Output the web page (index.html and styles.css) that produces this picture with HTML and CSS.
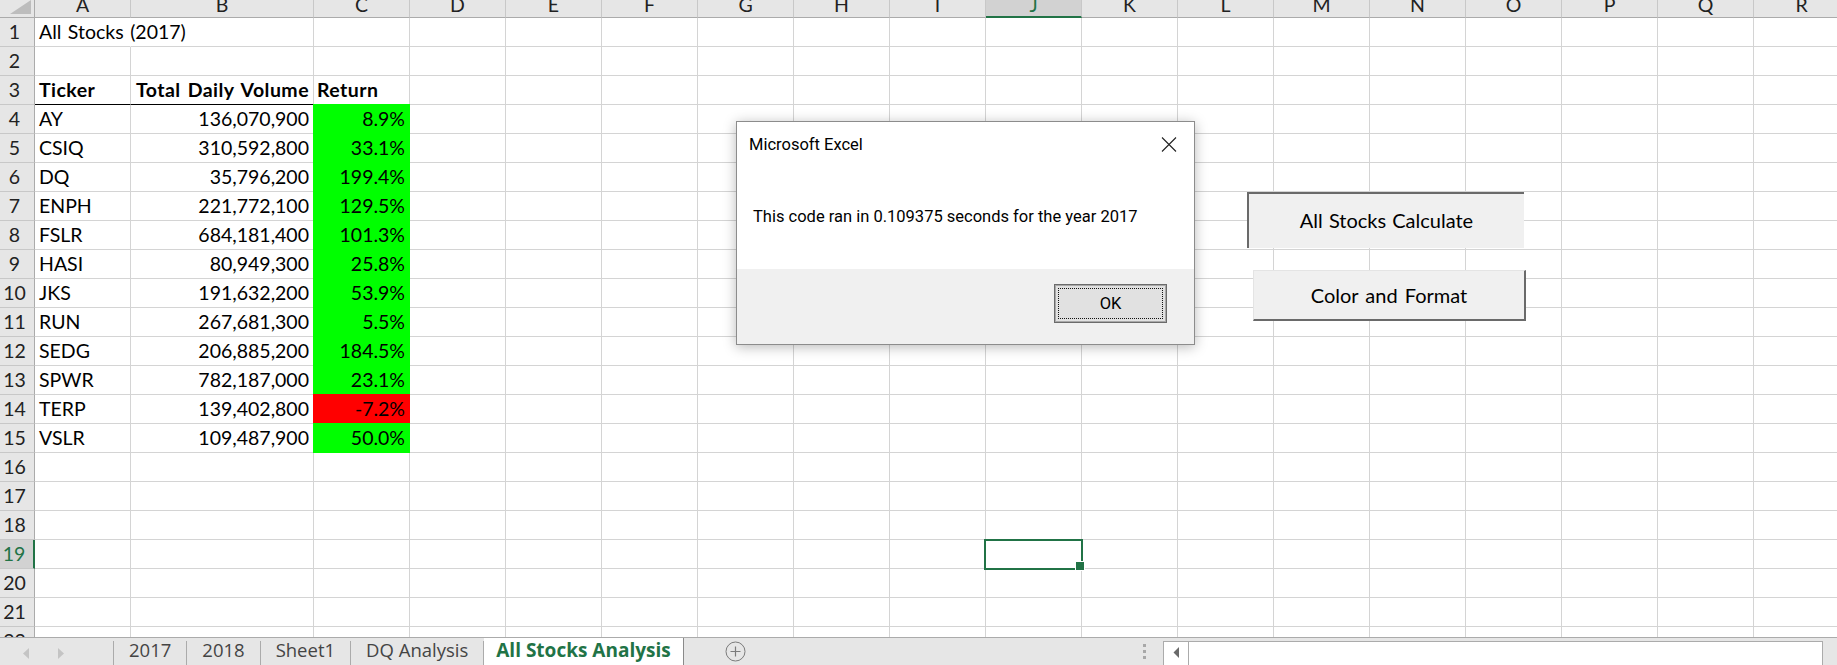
FILE: index.html
```html
<!DOCTYPE html>
<html>
<head>
<meta charset="utf-8">
<title>All Stocks Analysis</title>
<link rel="stylesheet" href="styles.css">
</head>
<body>
<div class="app">
  <div class="sheet">
    <div class="row head">
      <div class="corner"><svg width="34" height="17" viewBox="0 0 34 17"><polygon points="10,14 31,14 31,0" fill="#bdbdbd"/></svg></div>
      <div class="ch w-a">A</div>
      <div class="ch w-b">B</div>
      <div class="ch w-c">C</div>
      <div class="ch">D</div>
      <div class="ch">E</div>
      <div class="ch">F</div>
      <div class="ch">G</div>
      <div class="ch">H</div>
      <div class="ch">I</div>
      <div class="ch sel">J</div>
      <div class="ch">K</div>
      <div class="ch">L</div>
      <div class="ch">M</div>
      <div class="ch">N</div>
      <div class="ch">O</div>
      <div class="ch">P</div>
      <div class="ch">Q</div>
      <div class="ch">R</div>
    </div>

    <div class="row"><div class="rh">1</div><div class="c a spill">All Stocks (2017)</div><div class="c b"></div><div class="c cc"></div><div class="rest"></div></div>
    <div class="row"><div class="rh">2</div><div class="c a"></div><div class="c b"></div><div class="c cc"></div><div class="rest"></div></div>
    <div class="row"><div class="rh">3</div><div class="c a th">Ticker</div><div class="c b th">Total Daily Volume</div><div class="c cc th left">Return</div><div class="rest"></div></div>
    <div class="row"><div class="rh">4</div><div class="c a">AY</div><div class="c b">136,070,900</div><div class="c cc pos">8.9%</div><div class="rest"></div></div>
    <div class="row"><div class="rh">5</div><div class="c a">CSIQ</div><div class="c b">310,592,800</div><div class="c cc pos">33.1%</div><div class="rest"></div></div>
    <div class="row"><div class="rh">6</div><div class="c a">DQ</div><div class="c b">35,796,200</div><div class="c cc pos">199.4%</div><div class="rest"></div></div>
    <div class="row"><div class="rh">7</div><div class="c a">ENPH</div><div class="c b">221,772,100</div><div class="c cc pos">129.5%</div><div class="rest"></div></div>
    <div class="row"><div class="rh">8</div><div class="c a">FSLR</div><div class="c b">684,181,400</div><div class="c cc pos">101.3%</div><div class="rest"></div></div>
    <div class="row"><div class="rh">9</div><div class="c a">HASI</div><div class="c b">80,949,300</div><div class="c cc pos">25.8%</div><div class="rest"></div></div>
    <div class="row"><div class="rh">10</div><div class="c a">JKS</div><div class="c b">191,632,200</div><div class="c cc pos">53.9%</div><div class="rest"></div></div>
    <div class="row"><div class="rh">11</div><div class="c a">RUN</div><div class="c b">267,681,300</div><div class="c cc pos">5.5%</div><div class="rest"></div></div>
    <div class="row"><div class="rh">12</div><div class="c a">SEDG</div><div class="c b">206,885,200</div><div class="c cc pos">184.5%</div><div class="rest"></div></div>
    <div class="row"><div class="rh">13</div><div class="c a">SPWR</div><div class="c b">782,187,000</div><div class="c cc pos">23.1%</div><div class="rest"></div></div>
    <div class="row"><div class="rh">14</div><div class="c a">TERP</div><div class="c b">139,402,800</div><div class="c cc neg">-7.2%</div><div class="rest"></div></div>
    <div class="row"><div class="rh">15</div><div class="c a">VSLR</div><div class="c b">109,487,900</div><div class="c cc pos">50.0%</div><div class="rest"></div></div>
    <div class="row"><div class="rh">16</div><div class="c a"></div><div class="c b"></div><div class="c cc"></div><div class="rest"></div></div>
    <div class="row"><div class="rh">17</div><div class="c a"></div><div class="c b"></div><div class="c cc"></div><div class="rest"></div></div>
    <div class="row"><div class="rh">18</div><div class="c a"></div><div class="c b"></div><div class="c cc"></div><div class="rest"></div></div>
    <div class="row"><div class="rh rsel">19</div><div class="c a"></div><div class="c b"></div><div class="c cc"></div><div class="rest"></div></div>
    <div class="row"><div class="rh">20</div><div class="c a"></div><div class="c b"></div><div class="c cc"></div><div class="rest"></div></div>
    <div class="row"><div class="rh">21</div><div class="c a"></div><div class="c b"></div><div class="c cc"></div><div class="rest"></div></div>
    <div class="row"><div class="rh">22</div><div class="c a"></div><div class="c b"></div><div class="c cc"></div><div class="rest"></div></div>
  </div>

  <div class="tabbar">
    <div class="tabnav">
      <svg class="nav-l" width="8" height="11" viewBox="0 0 8 11"><polygon points="7,0 7,11 1,5.5" fill="#c4c4c4"/></svg>
      <svg class="nav-r" width="8" height="11" viewBox="0 0 8 11"><polygon points="1,0 1,11 7,5.5" fill="#c4c4c4"/></svg>
    </div>
    <div class="tab">2017</div>
    <div class="tab">2018</div>
    <div class="tab">Sheet1</div>
    <div class="tab">DQ Analysis</div>
    <div class="tab active">All Stocks Analysis</div>
    <div class="addsheet"><svg width="21" height="21" viewBox="0 0 21 21"><circle cx="10.5" cy="10.5" r="9.5" fill="none" stroke="#7b7b7b" stroke-width="1"/><path d="M10.5 5.5v10M5.5 10.5h10" stroke="#7b7b7b" stroke-width="1.2"/></svg></div>
    <div class="split"><span></span><span></span><span></span></div>
    <div class="hscroll">
      <div class="hs-btn"><svg width="7" height="11" viewBox="0 0 7 11"><polygon points="6,0 6,11 0.5,5.5" fill="#6a6a6a"/></svg></div>
      <div class="hs-track"></div>
    </div>
  </div>

  <div class="selbox"></div>

  <div class="xbtn calc">All Stocks Calculate</div>
  <div class="xbtn fmt">Color and Format</div>

  <div class="dialog">
    <div class="dlg-title">
      <span>Microsoft Excel</span>
      <svg class="dlg-close" width="16" height="15" viewBox="0 0 16 15"><path d="M1 0.5L15 14.5M15 0.5L1 14.5" stroke="#222" stroke-width="1.1"/></svg>
    </div>
    <div class="dlg-body">This code ran in 0.109375 seconds for the year 2017</div>
    <div class="dlg-foot">
      <div class="ok">OK</div>
    </div>
  </div>
</div>
</body>
</html>
```

FILE: styles.css
```css
* { box-sizing: border-box; }

html, body {
  margin: 0;
  padding: 0;
}

body {
  width: 1837px;
  height: 665px;
  overflow: hidden;
  background: #ffffff;
  font-family: Lato, "Liberation Sans", sans-serif;
  color: #000;
}

.app {
  position: relative;
  width: 1837px;
  height: 665px;
  display: flex;
  flex-direction: column;
  overflow: hidden;
}

/* ---------- sheet grid ---------- */
.sheet {
  flex: none;
  height: 637px;
  overflow: hidden;
}

.row {
  display: flex;
  height: 29px;
  width: 1850px;
}

.row > div {
  flex: none;
  height: 29px;
  border-bottom: 1px solid #d4d4d4;
}

.head {
  height: 18px;
}

.head > div {
  height: 18px;
  background: #e6e6e6;
  border-bottom: 1px solid #ababab;
  border-right: 1px solid #c8c8c8;
  font-size: 19.5px;
  line-height: 9px;
  text-align: center;
  color: #222;
  width: 96px;
}

.head > .corner {
  width: 35px;
  border-right: 1px solid #ababab;
}

.corner svg { display: block; }

.head > .w-a { width: 96px; }
.head > .w-b { width: 183px; }
.head > .w-c { width: 96px; }

.head > .sel {
  background: #d2d2d2;
  color: #217346;
  border-bottom: 2px solid #217346;
}

.row > .rh {
  width: 35px;
  background: #e6e6e6;
  border-right: 1px solid #ababab;
  border-bottom: 1px solid #c8c8c8;
  text-align: center;
  padding-right: 5px;
  font-size: 19.5px;
  line-height: 28px;
  color: #222;
}

.row > .rh.rsel {
  background: #d2d2d2;
  color: #217346;
  border-right: 2px solid #217346;
}

.c {
  font-size: 19.5px;
  line-height: 28px;
  word-spacing: 1.5px;
  padding: 0 4px;
  white-space: nowrap;
  border-right: 1px solid #d4d4d4;
}

.a { width: 96px; }
.b { width: 183px; text-align: right; }
.cc { width: 96px; text-align: right; }

.spill {
  border-right-color: transparent !important;
  position: relative;
  z-index: 1;
  overflow: visible;
}

.th {
  font-weight: 700;
  letter-spacing: 0.45px;
  word-spacing: 2px;
}

.cc.left { text-align: left; padding-left: 3px; }

.row > .a.th,
.row > .b.th {
  border-bottom: 1px solid #000;
}

.row > .pos {
  background: #00ff00;
  border-right-color: #00ff00;
  border-bottom-color: #00ff00;
  box-shadow: -1px 0 0 #00ff00, 0 -1px 0 #00ff00, -1px -1px 0 #00ff00;
}

.row > .neg {
  background: #ff0000;
  border-right-color: #ff0000;
  border-bottom-color: #ff0000;
  box-shadow: -1px 0 0 #ff0000, 0 -1px 0 #ff0000, -1px -1px 0 #ff0000;
}

.rest {
  flex: 1 0 auto;
  width: 1440px;
  background: repeating-linear-gradient(to right, transparent 0 95px, #d4d4d4 95px 96px);
}

/* ---------- selection ---------- */
.selbox {
  position: absolute;
  left: 984px;
  top: 539px;
  width: 99px;
  height: 31px;
  border: 2px solid #217346;
}

.selbox::after {
  content: "";
  position: absolute;
  right: -4px;
  bottom: -3px;
  width: 8px;
  height: 8px;
  background: #217346;
  border: 1px solid #ffffff;
}

/* ---------- sheet tabs ---------- */
.tabbar {
  flex: none;
  height: 28px;
  display: flex;
  align-items: flex-start;
  background: #e6e6e6;
  border-top: 1px solid #ababab;
  font-family: "Open Sans", "Noto Sans", sans-serif;
  overflow: hidden;
}

.tabnav {
  width: 114px;
  height: 24px;
  margin-top: 3px;
  border-right: 1px solid #ababab;
  display: flex;
  align-items: center;
  padding-left: 22px;
  gap: 27px;
}

.tabnav svg { display: block; }

.tab {
  height: 24px;
  margin-top: 3px;
  padding: 0 15px;
  border-right: 1px solid #ababab;
  font-size: 18.5px;
  line-height: 18px;
  color: #444;
  white-space: nowrap;
}

.tab.active {
  height: 27px;
  margin-top: 0;
  padding: 0 12px;
  background: #ffffff;
  color: #217346;
  font-weight: 700;
  font-size: 19px;
  line-height: 24px;
  border-right: 1px solid #8a8a8a;
}

.addsheet {
  margin-left: 41px;
  margin-top: 3px;
}

.addsheet svg { display: block; }

.split {
  margin-left: auto;
  margin-top: 6px;
  margin-right: 17px;
  width: 3px;
  display: flex;
  flex-direction: column;
  gap: 3px;
}

.split span {
  display: block;
  width: 3px;
  height: 3px;
  background: #a8a8a8;
}

.hscroll {
  width: 660px;
  height: 26px;
  margin-top: 3px;
  margin-right: 14px;
  background: #ffffff;
  border: 1px solid #ababab;
  display: flex;
}

.hs-btn {
  width: 25px;
  border-right: 1px solid #ababab;
  display: flex;
  align-items: center;
  justify-content: center;
  padding-bottom: 3px;
}

.hs-btn svg { display: block; }

.hs-track { flex: 1; }

/* ---------- form buttons on sheet ---------- */
.xbtn {
  position: absolute;
  display: flex;
  align-items: center;
  justify-content: center;
  background: #f0f0f0;
  font-size: 20px;
  word-spacing: 1px;
  color: #000;
}

.xbtn.calc {
  left: 1247px;
  top: 192px;
  width: 277px;
  height: 56px;
  border-top: 2px solid #6a6a6a;
  border-left: 2px solid #6a6a6a;
  padding-bottom: 2px;
}

.xbtn.fmt {
  left: 1253px;
  top: 270px;
  width: 273px;
  height: 51px;
  border-right: 2px solid #6a6a6a;
  border-bottom: 2px solid #6a6a6a;
  border-top: 1px solid #e4e4e4;
  border-left: 1px solid #e4e4e4;
  word-spacing: 2px;
}

/* ---------- message box ---------- */
.dialog {
  position: absolute;
  left: 736px;
  top: 121px;
  width: 459px;
  height: 224px;
  background: #ffffff;
  border: 1px solid #8c8c8c;
  box-shadow: 0 2px 12px rgba(0, 0, 0, 0.28);
  display: flex;
  flex-direction: column;
  font-family: Roboto, "Open Sans", sans-serif;
  font-size: 16.5px;
  color: #000;
  z-index: 5;
}

.dlg-title {
  height: 46px;
  flex: none;
  display: flex;
  justify-content: space-between;
  align-items: flex-start;
  padding: 12px 17px 0 12px;
  line-height: 22px;
}

.dlg-close {
  display: block;
  margin-top: 3px;
}

.dlg-body {
  flex: none;
  height: 101px;
  padding: 38px 0 0 16px;
  line-height: 22px;
  white-space: nowrap;
}

.dlg-foot {
  flex: 1;
  background: #f0f0f0;
  display: flex;
  justify-content: flex-end;
  align-items: flex-start;
  padding: 15px 27px 0 0;
}

.ok {
  position: relative;
  width: 113px;
  height: 39px;
  background: #e1e1e1;
  border: 1px solid #6b6b6b;
  box-shadow: inset 0 0 0 1px #a9a9a9;
  display: flex;
  align-items: center;
  justify-content: center;
  font-size: 16.5px;
}

.ok::before {
  content: "";
  position: absolute;
  left: 3px;
  top: 3px;
  right: 3px;
  bottom: 3px;
  border: 1px dotted #111;
}
```
